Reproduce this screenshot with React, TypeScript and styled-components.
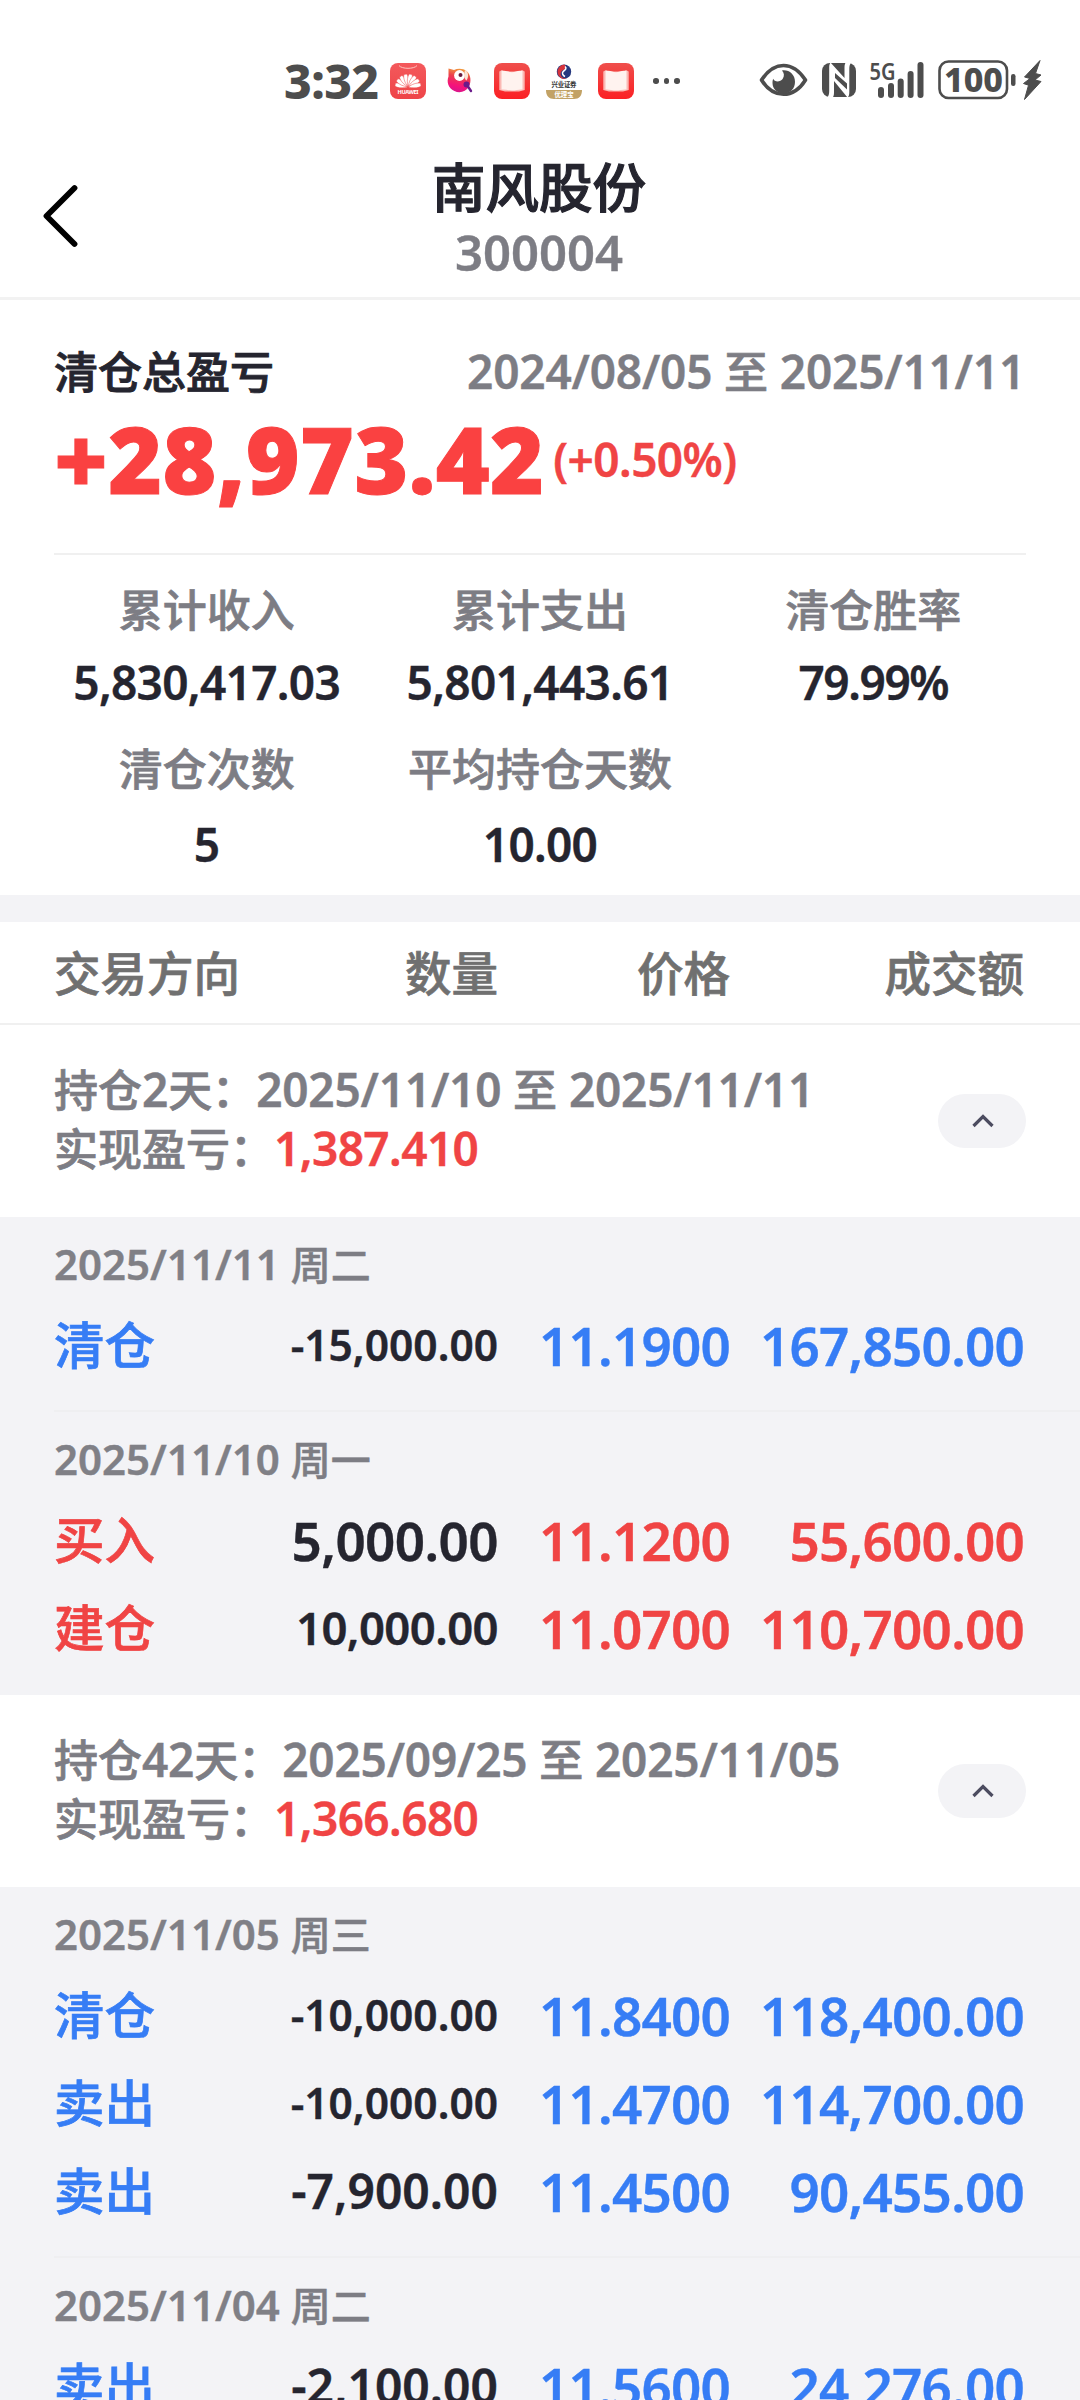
import React from 'react';
import styled, { createGlobalStyle } from 'styled-components';

const INK = '#25252f';
const GREY = '#7d7d84';
const RED = '#f04444';
const BLUE = '#367df5';
const PANEL = '#f3f3f6';
const STATUS = '#4d4d4d';

const GlobalStyle = createGlobalStyle`
  * { box-sizing: border-box; }
  html, body { margin: 0; padding: 0; background: #fff; }
  body {
    font-family: "Noto Sans", "Noto Sans CJK SC", sans-serif;
    color: ${INK};
  }
`;

const Screen = styled.div`
  width: 1080px;
  height: 2400px;
  overflow: hidden;
  background: #fff;
  display: flex;
  flex-direction: column;
`;

const Cn = styled.span<{ $size?: number; $stroke?: number; $color?: string }>`
  font-family: "Noto Sans CJK SC", sans-serif;
  font-weight: 500;
  font-size: ${p => p.$size ?? 44}px;
  -webkit-text-stroke: ${p => p.$stroke ?? 0.7}px currentColor;
  color: ${p => p.$color ?? GREY};
  line-height: 1;
  white-space: nowrap;
`;

const Num = styled.span<{ $size?: number; $color?: string; $track?: number }>`
  font-weight: 600;
  font-size: ${p => p.$size ?? 46}px;
  letter-spacing: ${p => p.$track ?? -0.2}px;
  -webkit-text-stroke: 0.4px currentColor;
  color: ${p => p.$color ?? INK};
  line-height: 1;
  white-space: pre;
`;

/* status bar */
const StatusBar = styled.div`
  height: 130px;
  flex: none;
  display: flex;
  justify-content: space-between;
  padding: 60px 38px 0 284px;
`;
const StatusSide = styled.div`
  display: flex;
  align-items: center;
  height: 42px;
`;
const Clock = styled.span`
  width: 106px;
  font-size: 48px;
  font-weight: 800;
  line-height: 42px;
  letter-spacing: -0.6px;
  color: ${STATUS};
`;
const AppIcons = styled.div`
  display: flex;
  align-items: center;
  gap: 16px;
`;
const Dots = styled.div`
  display: flex;
  gap: 5px;
  margin-left: 19px;
  i { width: 5.5px; height: 5.5px; border-radius: 50%; background: ${STATUS}; }
`;

/* title bar */
const TitleBar = styled.header`
  height: 170px;
  flex: none;
  border-bottom: 3px solid #f2f2f2;
  display: grid;
  grid-template-columns: 119px 1fr 121px;
`;
const BackButton = styled.button`
  border: 0;
  background: none;
  padding: 54px 0 0 42px;
  display: flex;
  align-items: flex-start;
`;
const TitleText = styled.div`
  display: flex;
  flex-direction: column;
  align-items: center;
  padding-top: 28px;
  gap: 16px;
`;

/* summary */
const Summary = styled.section`
  height: 253px;
  flex: none;
  padding: 0 54px;
`;
const SummaryHead = styled.div`
  display: flex;
  justify-content: space-between;
  align-items: baseline;
  padding: 48px 1px 0 0;
  height: 108px;
`;
const ProfitRow = styled.div`
  display: flex;
  align-items: center;
  height: 101px;
  gap: 9px;
`;
const Profit = styled.span`
  font-size: 92px;
  font-weight: 900;
  line-height: 1;
  letter-spacing: 0.4px;
  -webkit-text-stroke: 1px currentColor;
  color: #fa4141;
`;
const Rule = styled.hr<{ $left?: number; $right?: number; $color?: string }>`
  border: 0;
  flex: none;
  height: 2px;
  margin: 0 ${p => p.$right ?? 0}px 0 ${p => p.$left ?? 0}px;
  background: ${p => p.$color ?? '#f0f0f0'};
`;
const Stats = styled.section`
  height: 340px;
  flex: none;
  padding: 16px 40px 0 40px;
  display: grid;
  grid-template-columns: repeat(3, 1fr);
  grid-template-rows: 74px 73px 97px 57px;
  place-items: center;
`;
const Band = styled.div`
  height: 27px;
  flex: none;
  background: ${PANEL};
`;

/* table */
const columns = `
  display: grid;
  grid-template-columns: 170px 274px 232px 294px;
  align-items: center;
  padding: 0 56px 0 54px;
  & > :not(:first-child) { text-align: right; }
`;
const TableHead = styled.div`
  ${columns}
  height: 101px;
  padding-bottom: 3px;
  flex: none;
`;
const GroupHead = styled.div`
  height: 192px;
  flex: none;
  display: flex;
  align-items: center;
  justify-content: space-between;
  padding: 0 54px;
`;
const GroupText = styled.div`
  display: flex;
  flex-direction: column;
  margin-top: 8px;
`;
const GroupLine = styled.div`
  height: 59px;
  display: flex;
  align-items: baseline;
`;
const Toggle = styled.button`
  width: 88px;
  height: 54px;
  border: 0;
  border-radius: 27px;
  background: ${PANEL};
  display: flex;
  align-items: center;
  justify-content: center;
  padding: 0 0 0 1px;
`;
const DayBlock = styled.div<{ $last?: boolean }>`
  flex: none;
  padding-bottom: ${p => (p.$last ? 23 : 21)}px;
`;
const DayDate = styled.div`
  height: 84px;
  padding: 26px 0 0 54px;
  display: flex;
  align-items: baseline;
`;
const TradeRow = styled.div`
  ${columns}
  height: 88px;
  & > :first-child { padding-bottom: 5px; }
`;
const Panel = styled.div`
  background: ${PANEL};
  flex: none;
`;

function HuaweiIcon() {
  const petals = [-80, -57, -34, -12, 12, 34, 57, 80];
  return (
    <svg width="36" height="36" viewBox="0 0 36 36">
      <defs>
        <linearGradient id="hw" x1="0" y1="0" x2="0" y2="1">
          <stop offset="0" stopColor="#f4595c" />
          <stop offset="1" stopColor="#ee4448" />
        </linearGradient>
      </defs>
      <rect width="36" height="36" rx="8" fill="url(#hw)" />
      <path d="M9 2.600c3 3.600 15 3.600 18 0" fill="none" stroke="#ffc5c0" strokeWidth="1" />
      {petals.map(a => (
        <path key={a} d="M18 23.500c-1.800-3.300-3.200-9-1.400-12.500h2.800c1.800 3.500.4 9.200-1.400 12.500z" fill="#fff" stroke="#f04f52" strokeWidth=".5" transform={`rotate(${a} 18 24)`} />
      ))}
      <text x="18" y="31.300" textAnchor="middle" fontFamily="Noto Sans" fontWeight="700" fontSize="5.600" textLength="21" fill="#fff">HUAWEI</text>
    </svg>
  );
}

function BirdIcon() {
  return (
    <svg width="36" height="36" viewBox="0 0 36 36">
      <defs>
        <linearGradient id="bird" x1=".6" y1="0" x2=".4" y2="1">
          <stop offset="0" stopColor="#f2a03c" />
          <stop offset=".35" stopColor="#ec3f4c" />
          <stop offset=".75" stopColor="#f5127c" />
          <stop offset="1" stopColor="#d8168c" />
        </linearGradient>
      </defs>
      <path d="M6.500 5.500l5.500 1.600c4-2 9.500-1.500 12.500 1 4.500 3.500 5 11 2.400 15.400-3 5.500-9.500 7-14.500 4.500C6 25 4.500 18.500 6.500 13.500z" fill="url(#bird)" />
      <circle cx="17.500" cy="12.500" r="5.400" fill="#fff" />
      <circle cx="18.500" cy="12" r="2" fill="#6b1a3c" />
      <path d="M23 7c3.500 1.500 4 7 1.500 10.500-2-1-3-6-1.500-10.500z" fill="#fbe3d2" />
      <circle cx="24.500" cy="21.500" r="3" fill="#6a1a8a" />
      <path d="M26 23.500l3 4.500" stroke="#6a1a8a" strokeWidth="2.400" strokeLinecap="round" />
    </svg>
  );
}

function ReaderIcon() {
  return (
    <svg width="36" height="36" viewBox="0 0 36 36">
      <defs>
        <linearGradient id="rd" x1="0" y1="0" x2="0" y2="1">
          <stop offset="0" stopColor="#ef4f4c" />
          <stop offset="1" stopColor="#fb2024" />
        </linearGradient>
      </defs>
      <rect width="36" height="36" rx="8" fill="url(#rd)" />
      <path d="M5.300 8.500L8 7l2 1.500h16L28 7l2.700 1.500v18.500L25 28.500H11L5.300 27z" fill="#fbb9b4" />
      <path d="M7.500 8c5-1 7 1.200 10.500 1.200S23.500 7 28.500 8v18.500c-3.500-.3-7 1-10.500 1s-7-1.300-10.500-1z" fill="#fff3ef" />
    </svg>
  );
}

function BrokerIcon() {
  return (
    <svg width="36" height="36" viewBox="0 0 36 36">
      <circle cx="18" cy="8.700" r="7.200" fill="#26397f" />
      <path d="M18.500 1.500a7.200 7.200 0 1 0 2.500 14c-5 .3-7.400-3-6-6.200 1-2.400 4-2.300 4.500-4.500.3-1.500-.1-2.600-1-3.300z" fill="#d8343c" />
      <path d="M19 3.500c2.500 2-.5 3.700-2 5.200-1.300 1.600 0 3.800 2 4.800" fill="none" stroke="#fff" strokeWidth="1.500" />
      <text x="18" y="23.600" textAnchor="middle" fontFamily="Noto Sans CJK SC" fontWeight="700" fontSize="6.400" textLength="25" fill="#333">兴业证券</text>
      <path d="M0 27h36c0 6-3 9-8 9H8c-5 0-8-3-8-9z" fill="#c2a265" />
      <text x="18" y="34" textAnchor="middle" fontFamily="Noto Sans CJK SC" fontWeight="700" fontSize="6.400" fill="#fff">优理宝</text>
    </svg>
  );
}

function StatusIcons() {
  return (
    <svg width="284" height="42" viewBox="758 60 284 42" fill={STATUS} overflow="visible">
      <path d="M761.500 80c5-7.500 13-14.500 22-14.500s17 7 22 14.500c-5 8-13 14.300-22 14.300s-17-6.300-22-14.300z" fill="none" stroke={STATUS} strokeWidth="3.600" strokeLinejoin="round" />
      <path d="M782 70.500c7-1 13 4 13 11.300 0 6.700-4.500 11.700-11.200 11.700-6.300 0-11.300-4.500-11.300-10.500 0-2 .3-3.300.8-4.300 1 3.600 7 3.600 9.300.3 2-3 1.700-6-.6-8.500z" />
      <rect x="822" y="63" width="34" height="34" rx="8" />
      <path d="M830.500 62.500c-1 1.500-1.300 3-1.300 5V91c0 3-.5 5-2 6.500h5.500c.8-1 1.300-2.500 1.300-5V81l13.500 16.500c1.500-1 1.800-3 1.800-5.500V69c0-3 .5-5 2-6.500h-5.500c-.8 1-1.300 2.500-1.300 5V78z" fill="#fff" />
      <path d="M835 73l12 10.500v6L835 78z" />
      <text x="869.500" y="79.500" fontFamily="Noto Sans" fontWeight="600" fontSize="23" textLength="26" lengthAdjust="spacingAndGlyphs">5G</text>
      <rect x="878" y="87" width="6" height="11" rx="3" />
      <rect x="888" y="83" width="6" height="15" rx="3" />
      <rect x="897.700" y="78.500" width="6" height="19.500" rx="3" />
      <rect x="907.600" y="71" width="6" height="27" rx="3" />
      <rect x="917.500" y="62" width="6" height="36" rx="3" />
      <rect x="939.500" y="61.500" width="67.500" height="36.500" rx="9" fill="none" stroke={STATUS} strokeWidth="2.600" />
      <rect x="1011" y="74" width="4.500" height="12" rx="2.200" />
      <text x="944" y="91.700" fontFamily="Noto Sans" fontWeight="800" fontSize="33" textLength="59" lengthAdjust="spacingAndGlyphs">100</text>
      <path d="M1040 60.500L1024.500 77l5.500 1.500-6.500 5 5 1.700-4 14.300 16.500-18-6-1.500 6-5-5.500-1.500z" stroke={STATUS} strokeWidth="1" strokeLinejoin="round" />
    </svg>
  );
}

type Trade = { side: string; buy?: boolean; qty: string; qtySize: number; price: string; amount: string };
type Day = { date: string; week: string; trades: Trade[] };
type Group = { days: string; range: [string, string]; profit: string; list: Day[] };

const groups: Group[] = [
  {
    days: '2', range: ['2025/11/10', '2025/11/11'], profit: '1,387.410',
    list: [
      { date: '2025/11/11', week: '周二', trades: [{ side: '清仓', qty: '-15,000.00', qtySize: 42.5, price: '11.1900', amount: '167,850.00' }] },
      {
        date: '2025/11/10', week: '周一', trades: [
          { side: '买入', buy: true, qty: '5,000.00', qtySize: 53, price: '11.1200', amount: '55,600.00' },
          { side: '建仓', buy: true, qty: '10,000.00', qtySize: 45.5, price: '11.0700', amount: '110,700.00' },
        ],
      },
    ],
  },
  {
    days: '42', range: ['2025/09/25', '2025/11/05'], profit: '1,366.680',
    list: [
      {
        date: '2025/11/05', week: '周三', trades: [
          { side: '清仓', qty: '-10,000.00', qtySize: 42.5, price: '11.8400', amount: '118,400.00' },
          { side: '卖出', qty: '-10,000.00', qtySize: 42.5, price: '11.4700', amount: '114,700.00' },
          { side: '卖出', qty: '-7,900.00', qtySize: 48, price: '11.4500', amount: '90,455.00' },
        ],
      },
      { date: '2025/11/04', week: '周二', trades: [{ side: '卖出', qty: '-2,100.00', qtySize: 48, price: '11.5600', amount: '24,276.00' }] },
    ],
  },
];

const stats: string[][] = [
  ['累计收入', '累计支出', '清仓胜率'],
  ['5,830,417.03', '5,801,443.61', '79.99%'],
  ['清仓次数', '平均持仓天数', ''],
  ['5', '10.00', ''],
];

export default function App() {
  return (
    <Screen>
      <GlobalStyle />
      <StatusBar>
        <StatusSide>
          <Clock>3:32</Clock>
          <AppIcons>
            <HuaweiIcon />
            <BirdIcon />
            <ReaderIcon />
            <BrokerIcon />
            <ReaderIcon />
          </AppIcons>
          <Dots><i /><i /><i /></Dots>
        </StatusSide>
        <StatusSide><StatusIcons /></StatusSide>
      </StatusBar>

      <TitleBar>
        <BackButton aria-label="back">
          <svg width="38" height="64" viewBox="0 0 38 64">
            <path d="M32.500 4L4.500 32l28 28" fill="none" stroke="#000" strokeWidth="5.800" strokeLinecap="round" strokeLinejoin="round" />
          </svg>
        </BackButton>
        <TitleText>
          <Cn $size={53.5} $stroke={1.2} $color={INK}>南风股份</Cn>
          <Num $size={49} $color={GREY} $track={0}>300004</Num>
        </TitleText>
      </TitleBar>

      <Summary>
        <SummaryHead>
          <Cn $stroke={0.9} $color={INK}>清仓总盈亏</Cn>
          <span>
            <Num $color={GREY}>2024/08/05 </Num><Cn>至</Cn><Num $color={GREY}> 2025/11/11</Num>
          </span>
        </SummaryHead>
        <ProfitRow>
          <Profit>+28,973.42</Profit>
          <Num $color={RED} $track={-0.6}>(+0.50%)</Num>
        </ProfitRow>
      </Summary>
      <Rule $left={54} $right={54} />

      <Stats>
        {stats.map((row, r) => row.map((t, c) => (
          r % 2 === 0
            ? <Cn key={`${r}${c}`}>{t}</Cn>
            : <Num key={`${r}${c}`} $track={t.endsWith('%') ? -1.4 : -0.7}>{t}</Num>
        )))}
      </Stats>
      <Band />

      <TableHead>
        {['交易方向', '数量', '价格', '成交额'].map(t => <Cn key={t} $size={46.5} $color="#707070">{t}</Cn>)}
      </TableHead>
      <Rule />

      {groups.map(g => (
        <React.Fragment key={g.days}>
          <GroupHead>
            <GroupText>
              <GroupLine>
                <Cn>持仓</Cn><Num $color={GREY}>{g.days}</Num><Cn>天：</Cn>
                <Num $color={GREY}>{g.range[0]} </Num><Cn>至</Cn><Num $color={GREY}> {g.range[1]}</Num>
              </GroupLine>
              <GroupLine>
                <Cn>实现盈亏：</Cn><Num $color={RED} $track={-0.6}>{g.profit}</Num>
              </GroupLine>
            </GroupText>
            <Toggle aria-label="collapse">
              <svg width="24" height="16" viewBox="0 0 24 16">
                <path d="M2.500 13L12 3.500 21.500 13" fill="none" stroke="#4c4c60" strokeWidth="3.200" />
              </svg>
            </Toggle>
          </GroupHead>
          <Panel>
            {g.list.map((d, i) => (
              <React.Fragment key={d.date}>
                <DayBlock $last={i === g.list.length - 1}>
                  <DayDate>
                    <Num $size={42} $color="#808086" $track={0}>{d.date} </Num><Cn $size={40} $stroke={0.5}>{d.week}</Cn>
                  </DayDate>
                  {d.trades.map((t, k) => {
                    const tone = t.buy ? RED : BLUE;
                    return (
                      <TradeRow key={k}>
                        <Cn $size={50.5} $color={tone}>{t.side}</Cn>
                        <Num $size={t.qtySize} $track={t.qty[0] === '-' ? 0 : -0.6}>{t.qty}</Num>
                        <Num $size={53} $color={tone} $track={-0.8}>{t.price}</Num>
                        <Num $size={53} $color={tone} $track={-0.8}>{t.amount}</Num>
                      </TradeRow>
                    );
                  })}
                </DayBlock>
                {i < g.list.length - 1 && <Rule $left={54} $color="#efeff1" />}
              </React.Fragment>
            ))}
          </Panel>
        </React.Fragment>
      ))}
    </Screen>
  );
}
